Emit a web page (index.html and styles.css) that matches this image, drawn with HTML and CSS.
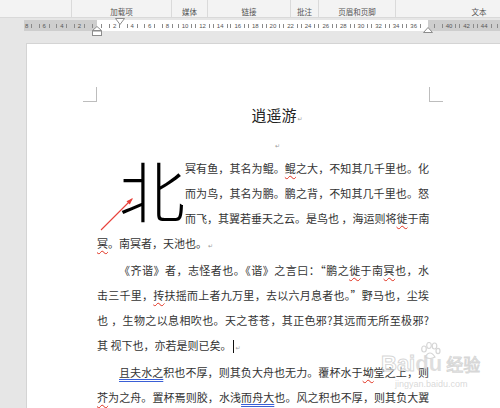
FILE: index.html
```html
<!DOCTYPE html>
<html lang="zh-CN">
<head>
<meta charset="utf-8">
<title>逍遥游</title>
<link rel="stylesheet" href="styles.css">
</head>
<body>
<div class="toolbar">
  <div class="grp g0"></div>
  <div class="grp g1">加载项</div>
  <div class="grp g2">媒体</div>
  <div class="grp g3">链接</div>
  <div class="grp g4">批注</div>
  <div class="grp g5">页眉和页脚</div>
  <div class="grp g6">文本</div>
</div>
<div class="ruler">
  <div class="band">
    <div class="seg seg-left">
      <span class="c"><i></i><b>8</b><i></i></span><span class="c"><i></i><b>6</b><i></i></span><span class="c"><i></i><b>4</b><i></i></span><span class="c"><i></i><b>2</b><i></i></span><span class="pad"><i></i></span>
    </div>
    <div class="seg seg-mid">
      <span class="pad"><i></i></span><span class="c"><i></i><b>2</b><i></i></span><span class="c"><i></i><b>4</b><i></i></span><span class="c"><i></i><b>6</b><i></i></span><span class="c"><i></i><b>8</b><i></i></span><span class="c"><i></i><b>10</b><i></i></span><span class="c"><i></i><b>12</b><i></i></span><span class="c"><i></i><b>14</b><i></i></span><span class="c"><i></i><b>16</b><i></i></span><span class="c"><i></i><b>18</b><i></i></span><span class="c"><i></i><b>20</b><i></i></span><span class="c"><i></i><b>22</b><i></i></span><span class="c"><i></i><b>24</b><i></i></span><span class="c"><i></i><b>26</b><i></i></span><span class="c"><i></i><b>28</b><i></i></span><span class="c"><i></i><b>30</b><i></i></span><span class="c"><i></i><b>32</b><i></i></span><span class="c"><i></i><b>34</b><i></i></span><span class="c"><i></i><b>36</b><i></i></span>
    </div>
    <div class="seg seg-right">
      <span class="pad2"><i></i></span><span class="c"><i></i><b>40</b><i></i></span><span class="c"><i></i><b>42</b><i></i></span><span class="c"><i></i><b>44</b><i></i></span><span class="pad"><i></i></span>
    </div>
  </div>
  <svg class="mk mk-first" width="10" height="7" viewBox="0 0 10 7"><path d="M0.5 0.5 H9.5 L5 6.5 Z" fill="#fff" stroke="#8c8c8c"/></svg>
  <svg class="mk mk-hang" width="10" height="10" viewBox="0 0 10 10"><path d="M5 0.5 L9.5 4.5 H0.5 Z" fill="#fff" stroke="#8c8c8c"/><rect x="0.5" y="5" width="9" height="4.5" fill="#fff" stroke="#8c8c8c"/></svg>
  <svg class="mk mk-right" width="10" height="6" viewBox="0 0 10 6"><path d="M5 0.5 L9.5 5.5 H0.5 Z" fill="#fff" stroke="#8c8c8c"/></svg>
</div>
<div class="page">
  <div class="corner corner-l"></div>
  <div class="corner corner-r"></div>
  <div class="content">
    <div class="title">逍遥游<span class="pm">↵</span></div>
    <div class="empty"><span class="pm">↵</span></div>
    <div class="para">
      <div class="dropcap">北</div>
      <div class="ln">冥有鱼，其名为鲲。<span class="sp">鲲</span>之大，不知其几千里也。化</div>
      <div class="ln">而为鸟，其名为鹏。鹏之背，不知其几千里也。怒</div>
      <div class="ln sq1">而飞，其翼若垂天之云。是鸟也 ，海运则将<span class="sp">徙</span>于南</div>
      <div class="ln last"><span class="sp">冥</span>。南冥者，天池也。<span class="pm">↵</span></div>
    </div>
    <div class="para">
      <div class="ln ind">《齐谐》者，志怪者也。《谐》之言曰：“鹏之<span class="sp">徙</span>于南<span class="sp">冥</span>也，水</div>
      <div class="ln">击三千里，<span class="sp">抟</span>扶摇而上者九万里，去以六月息者也。”野马也，尘埃</div>
      <div class="ln">也 ，生物之以息相吹也。天之苍苍，其正色邪?其远而无所至极邪?</div>
      <div class="ln last">其 视下也，亦若是则已矣。<span class="caret"></span><span class="pm">↵</span></div>
    </div>
    <div class="para">
      <div class="ln ind"><span class="gr">且夫水之</span>积也不厚，则其负大舟也无力。覆杯水于<span class="sp">坳</span>堂之上，则</div>
      <div class="ln sq2"><span class="sp">芥</span>为之舟。置杯焉则胶，水浅<span class="gr">而舟大</span>也。风之积也不厚，则其负大翼</div>
    </div>
  </div>
  <svg class="arrow" width="40" height="40" viewBox="0 0 40 40"><path d="M2 36 L33 5" stroke="#e8403a" stroke-width="1.1" fill="none"/><path d="M34 4 L27.5 7.2 L30.8 10.5 Z" fill="#e8403a"/></svg>
  <div class="wm">
    <div class="wm-top"><span class="wm-bai">Bai</span><span class="wm-du">du</span><span class="wm-jy">经验</span>
      <svg class="wm-paw" width="22" height="18" viewBox="0 0 22 18"><g fill="none" stroke="#d6d6d6" stroke-width="1.2"><ellipse cx="5" cy="7" rx="2.3" ry="3"/><ellipse cx="10" cy="3.5" rx="2.3" ry="3"/><ellipse cx="15.5" cy="4" rx="2.3" ry="3"/><ellipse cx="19" cy="9" rx="2" ry="2.6"/><path d="M6 15 Q11 7 16 15 Q11 18 6 15 Z"/></g></svg>
    </div>
    <div class="wm-url">jingyan.baidu.com</div>
  </div>
</div>
</body>
</html>
```
FILE: styles.css
```css
html, body {
  margin: 0;
  padding: 0;
}
body {
  width: 500px;
  height: 408px;
  overflow: hidden;
  background: #e6e6e6;
  font-family: "Noto Sans CJK SC", "Noto Sans", sans-serif;
}
.toolbar {
  display: flex;
  height: 17px;
  background: #f3f3f3;
  border-bottom: 1px solid #d9d9d9;
  overflow: hidden;
}
.grp {
  flex: none;
  box-sizing: border-box;
  border-right: 1px solid #dadada;
  font-size: 7.5px;
  color: #555;
  text-align: center;
  line-height: 17px;
  padding-top: 3px;
}
.g0 { width: 72px; }
.g1 { width: 100px; }
.g2 { width: 36px; }
.g3 { width: 83px; }
.g4 { width: 28px; }
.g5 { width: 77px; }
.g6 { width: 166px; border-right: none; }

.ruler {
  position: relative;
  height: 25px;
}
.band {
  position: absolute;
  left: 24px;
  right: 0;
  top: 2px;
  height: 11px;
  display: flex;
}
.seg {
  display: flex;
  align-items: center;
  overflow: hidden;
  flex: none;
  height: 11px;
}
.seg-left {
  width: 73px;
  background: #cecece;
  justify-content: flex-end;
}
.seg-mid {
  width: 331px;
  background: #fff;
}
.seg-right {
  width: 72px;
  background: #cecece;
}
.c {
  flex: none;
  width: 17.6px;
  display: flex;
  justify-content: center;
  align-items: center;
  gap: 3px;
}
.pad {
  flex: none;
  width: 8.8px;
  display: flex;
  justify-content: center;
  align-items: center;
}
.pad2 {
  flex: none;
  width: 12.2px;
  display: flex;
  justify-content: center;
  align-items: center;
}
.c i, .pad i, .pad2 i {
  display: block;
  width: 1px;
  height: 4px;
  background: #8a8a8a;
}
.c b {
  font-family: "Liberation Sans", sans-serif;
  font-weight: normal;
  font-size: 6px;
  color: #555;
  line-height: 1;
}
.mk {
  position: absolute;
  display: block;
}
.mk-first { left: 115px; top: 0px; }
.mk-hang { left: 92px; top: 8px; }
.mk-right { left: 423px; top: 9px; }

.page {
  position: relative;
  margin-left: 26px;
  width: 480px;
  height: 365px;
  background: #fff;
  border-top: 1px solid #d4d4d4;
  border-left: 1px solid #d4d4d4;
  box-sizing: border-box;
  padding: 61px 0 0 70px;
}
.corner {
  position: absolute;
  top: 43px;
  width: 13px;
  height: 14px;
  border-bottom: 1px solid #bdbdbd;
}
.corner-l {
  left: 56px;
  border-right: 1px solid #bdbdbd;
}
.corner-r {
  left: 402px;
  border-left: 1px solid #bdbdbd;
}
.content {
  width: 332px;
  color: #333;
  font-size: 11px;
  line-height: 25px;
}
.title {
  font-size: 15px;
  line-height: 20px;
  text-align: center;
  padding-left: 28px;
  color: #222;
  margin-bottom: 1.5px;
}
.empty {
  text-align: center;
  padding-left: 28px;
  height: 25px;
}
.pm {
  font-family: "DejaVu Sans", sans-serif;
  font-size: 6px;
  color: #9a9a9a;
  margin-left: 1px;
}
.dropcap {
  float: left;
  width: 88px;
  height: 64px;
  margin-bottom: 11px;
  text-align: right;
  font-size: 66px;
  line-height: 64px;
  font-weight: 300;
  color: #000;
}
.ln {
  white-space: nowrap;
  text-align: justify;
  text-align-last: justify;
}
.ln.last {
  text-align: left;
  text-align-last: left;
}
.ln.ind {
  padding-left: 22px;
}
.sq1 { letter-spacing: -0.55px; }
.sq2 { letter-spacing: -0.32px; }
.sp {
  text-decoration: underline wavy #e0301e;
  text-decoration-thickness: 1px;
  text-underline-offset: 2px;
}
.gr {
  text-decoration: underline double #3a5fd6;
  text-decoration-thickness: 1px;
  text-underline-offset: 2px;
}
.caret {
  display: inline-block;
  width: 1px;
  height: 13px;
  background: #111;
  vertical-align: middle;
  margin-left: 2px;
}
.arrow {
  position: absolute;
  left: 72px;
  top: 150px;
}
.wm {
  position: absolute;
  left: 354px;
  top: 302px;
  width: 100px;
  color: rgba(190, 190, 190, 0.55);
  pointer-events: none;
}
.wm-top {
  position: relative;
  height: 30px;
  display: flex;
  align-items: flex-end;
  font-family: "Liberation Sans", sans-serif;
}
.wm-bai, .wm-du {
  font-size: 22px;
  font-weight: bold;
  line-height: 24px;
  color: rgba(255, 255, 255, 0.6);
  -webkit-text-stroke: 1px rgba(180, 180, 180, 0.55);
}
.wm-du {
  color: rgba(190, 190, 190, 0.5);
  -webkit-text-stroke: 0;
}
.wm-jy {
  font-family: "Noto Sans CJK SC", sans-serif;
  font-size: 17px;
  line-height: 24px;
  margin-left: 4px;
  color: rgba(255, 255, 255, 0.6);
  -webkit-text-stroke: 1px rgba(180, 180, 180, 0.55);
}
.wm-paw {
  position: absolute;
  left: 38px;
  top: -4px;
}
.wm-url {
  font-family: "Liberation Sans", sans-serif;
  font-size: 9px;
  line-height: 12px;
  margin-left: 14px;
  margin-top: 2px;
  color: rgba(200, 200, 200, 0.7);
}
```
